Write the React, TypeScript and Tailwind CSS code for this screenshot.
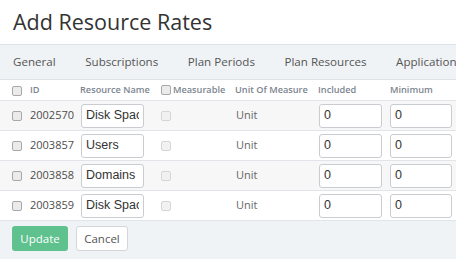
const rows = [
  { id: "2002570", name: "Disk Space" },
  { id: "2003857", name: "Users" },
  { id: "2003858", name: "Domains" },
  { id: "2003859", name: "Disk Space" },
];

const tabs = ["General", "Subscriptions", "Plan Periods", "Plan Resources", "Applications"];

function Check({ disabled }: { disabled?: boolean }) {
  return (
    <span
      className={
        disabled
          ? "inline-block w-[10px] h-[10px] rounded-[2px] border border-[#d6d6d6] bg-[#f1f1f1]"
          : "inline-block w-[10px] h-[10px] rounded-[2px] border border-[#a8a8a8] bg-[#ebebeb]"
      }
    />
  );
}

function Field({ value, w }: { value: string; w: string }) {
  return (
    <div
      className={`${w} h-[24px] flex items-center rounded-[3px] border border-[#c9cdd2] bg-white px-[4px] font-['Liberation_Sans',Arial,sans-serif] text-[12.5px] text-[#333]`}
    >
      <span className="block w-full overflow-hidden whitespace-nowrap">{value}</span>
    </div>
  );
}

export default function App() {
  return (
    <div className="w-[456px] h-[259px] overflow-hidden bg-[#f0f3f6] font-['Open_Sans',sans-serif]">
      <div className="h-[44px] bg-white flex items-center px-[13px] pb-[1px]">
        <h1 className="text-[21.5px] leading-none text-[#333]">Add Resource Rates</h1>
      </div>

      <div className="h-[36px] border-y border-[#dce2e8] flex items-center gap-[29.5px] px-[13px] whitespace-nowrap text-[11.6px] text-[#555]">
        {tabs.map((t) => (
          <span key={t}>{t}</span>
        ))}
      </div>

      <div className="bg-white">
        <div className="h-[21px] border-b border-[#e1e4e8] grid grid-cols-[30px_50px_81px_74px_83px_72px_66px] items-center text-[9.2px] font-semibold text-[#7c8590] whitespace-nowrap">
          <div className="pl-[12px] flex pt-[2px]">
            <Check />
          </div>
          <div>ID</div>
          <div>Resource Name</div>
          <div className="flex items-center gap-[2px]">
            <Check />
            <span>Measurable</span>
          </div>
          <div>Unit Of Measure</div>
          <div>Included</div>
          <div>Minimum</div>
        </div>

        {rows.map((r, i) => (
          <div
            key={i}
            className={`h-[30px] border-b border-[#e1e4e8] grid grid-cols-[30px_50px_81px_74px_83px_72px_66px] items-center text-[11px] ${
              i % 2 === 0 ? "bg-[#f7f7f7]" : "bg-white"
            }`}
          >
            <div className="pl-[12px] flex">
              <Check />
            </div>
            <div className="text-[#4d4d4d]">{r.id}</div>
            <div className="pl-[1px]">
              <Field value={r.name} w="w-[63px]" />
            </div>
            <div className="flex">
              <Check disabled />
            </div>
            <div className="pl-[1px] text-[#666]">Unit</div>
            <div className="pl-[1px]">
              <Field value="0" w="w-[63px]" />
            </div>
            <div>
              <Field value="0" w="w-[62px]" />
            </div>
          </div>
        ))}
      </div>

      <div className="flex gap-[8px] px-[12px] pt-[5px]">
        <button className="w-[56px] h-[25px] rounded-[3px] bg-[#5ec18e] text-white text-[11.5px]">
          Update
        </button>
        <button className="w-[52px] h-[25px] rounded-[3px] border border-[#d3d7db] bg-white text-[#555] text-[11.5px]">
          Cancel
        </button>
      </div>
    </div>
  );
}
